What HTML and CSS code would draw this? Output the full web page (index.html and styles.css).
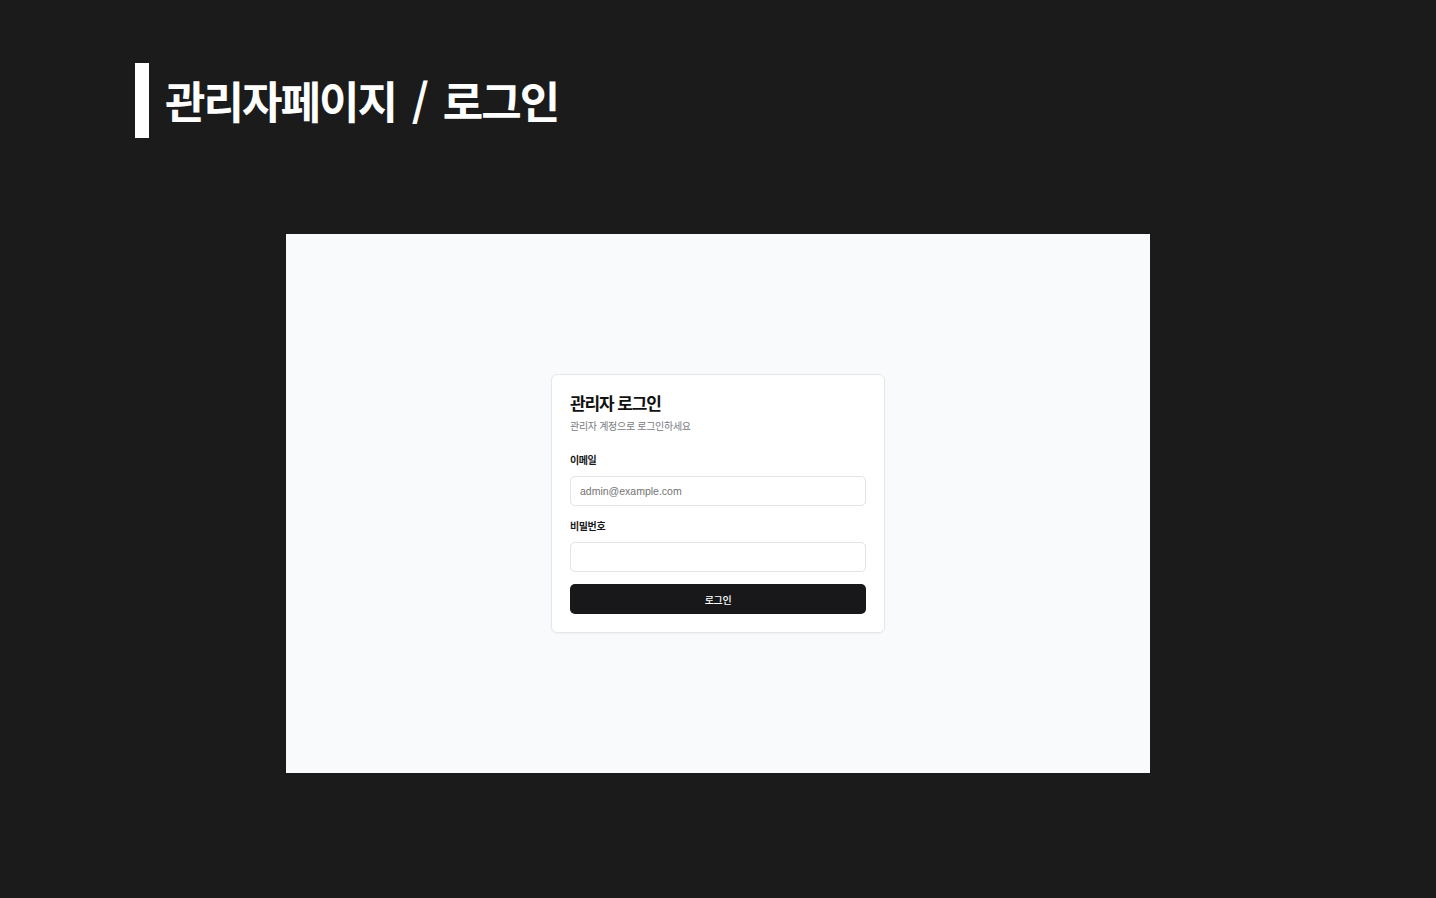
FILE: index.html
```html
<!DOCTYPE html>
<html lang="ko">
<head>
<meta charset="utf-8">
<title>관리자페이지 / 로그인</title>
<link rel="stylesheet" href="styles.css">
</head>
<body>
<div class="page">
  <header class="heading">
    <div class="heading-bar"></div>
    <h1 class="heading-title">관리자페이지 / 로그인</h1>
  </header>
  <div class="frame">
    <div class="card">
      <h2 class="card-title">관리자 로그인</h2>
      <p class="card-desc">관리자 계정으로 로그인하세요</p>
      <form class="form">
        <div class="field">
          <label class="label">이메일</label>
          <div class="input"><span class="placeholder">admin@example.com</span></div>
        </div>
        <div class="field">
          <label class="label">비밀번호</label>
          <div class="input"></div>
        </div>
        <div class="button">로그인</div>
      </form>
    </div>
  </div>
</div>
</body>
</html>
```
FILE: styles.css
```css
* { box-sizing: border-box; }
html, body { margin: 0; padding: 0; }
body {
  background: #1b1b1b;
  font-family: "Noto Sans CJK KR", "Noto Sans", sans-serif;
  width: 1436px;
  height: 898px;
  overflow: hidden;
}
.page {
  padding: 63px 0 0 135px;
}
.heading {
  display: flex;
  align-items: center;
  height: 75px;
}
.heading-bar {
  width: 14px;
  height: 75px;
  background: #ffffff;
}
.heading-title {
  margin: -2px 0 0 16px;
  color: #ffffff;
  font-size: 44px;
  font-weight: 700;
  letter-spacing: -2px;
  line-height: 1;
  word-spacing: 5.5px;
}
.frame {
  margin: 96px 0 0 151px;
  width: 864px;
  height: 539px;
  background: #f8fafc;
  display: flex;
  align-items: center;
  justify-content: center;
}
.card {
  width: 334px;
  background: #ffffff;
  border: 1px solid #e5e7eb;
  border-radius: 6px;
  box-shadow: 0 1px 2px rgba(0,0,0,0.04);
  padding: 16px 18px 18px;
}
.card-title {
  margin: 0;
  font-size: 17px;
  font-weight: 700;
  color: #111111;
  letter-spacing: -1.1px;
  line-height: 24px;
}
.card-desc {
  margin: 4px 0 0;
  font-size: 10px;
  color: #7a7a82;
  letter-spacing: -0.3px;
  line-height: 14px;
}
.form {
  margin-top: 22px;
  display: flex;
  flex-direction: column;
}
.field {
  display: flex;
  flex-direction: column;
  gap: 11px;
  margin-bottom: 14px;
}
.field + .field {
  margin-bottom: 12px;
}
.field + .field .label {
  margin-top: 1px;
}
.label {
  font-size: 10px;
  font-weight: 700;
  color: #18181b;
  letter-spacing: -0.4px;
  line-height: 10px;
}
.input {
  height: 30px;
  border: 1px solid #e4e4e7;
  border-radius: 5px;
  background: #ffffff;
  display: flex;
  align-items: center;
  padding: 0 9px;
}
.placeholder {
  font-family: "Liberation Sans", Arial, sans-serif;
  font-size: 10.5px;
  color: #737373;
}
.button {
  height: 30px;
  border-radius: 5px;
  background: #18181b;
  color: #ffffff;
  font-size: 10px;
  font-weight: 500;
  letter-spacing: -0.3px;
  display: flex;
  align-items: center;
  justify-content: center;
}
```
